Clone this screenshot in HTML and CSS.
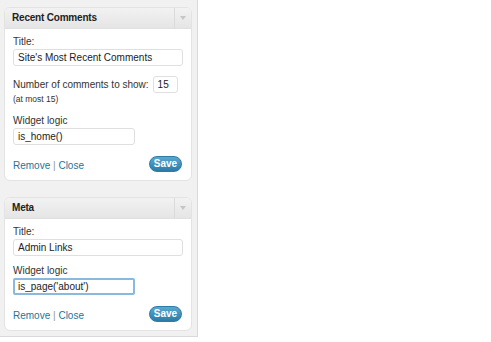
FILE: index.html
```html
<!DOCTYPE html>
<html lang="en">
<head>
  <meta charset="UTF-8" />
  <title>Widgets</title>
  <link rel="stylesheet" href="styles.css">
</head>
<body>
  <div class="sidebar">
    <div class="widget">
      <div class="widget-top">
        <div class="widget-title">Recent Comments</div>
        <div class="widget-action"><span class="arrow"></span></div>
      </div>
      <div class="widget-inside">
        <label class="field-label">Title:</label>
        <input type="text" class="wide" value="Site's Most Recent Comments" />
        <div class="count-row">
          <span>Number of comments to show:</span>
          <input type="text" class="tiny" value="15" />
        </div>
        <div class="hint">(at most 15)</div>
        <label class="field-label logic-label">Widget logic</label>
        <input type="text" class="mid" value="is_home()" />
        <div class="control-row">
          <span class="links"><a href="#">Remove</a> | <a href="#">Close</a></span>
          <button class="save">Save</button>
        </div>
      </div>
    </div>

    <div class="widget">
      <div class="widget-top">
        <div class="widget-title">Meta</div>
        <div class="widget-action"><span class="arrow"></span></div>
      </div>
      <div class="widget-inside">
        <label class="field-label">Title:</label>
        <input type="text" class="wide" value="Admin Links" />
        <label class="field-label logic-label">Widget logic</label>
        <input type="text" class="mid focused" value="is_page('about')" />
        <div class="control-row">
          <span class="links"><a href="#">Remove</a> | <a href="#">Close</a></span>
          <button class="save">Save</button>
        </div>
      </div>
    </div>
  </div>
</body>
</html>
```

FILE: styles.css
```css
body {
  margin: 0;
  background: #fff;
  font-family: "Liberation Sans", Arial, sans-serif;
  font-size: 10px;
  color: #333;
}

.sidebar {
  width: 198px;
  height: 337px;
  box-sizing: border-box;
  background: #f1f1f1;
  border-right: 1px solid #d9d9d9;
  border-bottom: 1px solid #d9d9d9;
  padding: 7px 5px 0 4px;
}

.widget {
  background: #fff;
  border: 1px solid #e3e3e3;
  border-radius: 6px;
  margin-bottom: 16px;
  overflow: hidden;
}

.widget-top {
  display: flex;
  height: 20px;
  background: linear-gradient(#f2f2f2, #e5e5e5);
  border-bottom: 1px solid #e0e0e0;
}

.widget-title {
  flex: 1;
  padding-left: 7px;
  line-height: 20px;
  font-weight: bold;
  letter-spacing: -0.2px;
  color: #222;
}

.widget-action {
  width: 16px;
  border-left: 1px solid #dadada;
  display: flex;
  align-items: center;
  justify-content: center;
}

.arrow {
  width: 0;
  height: 0;
  border-left: 3px solid transparent;
  border-right: 3px solid transparent;
  border-top: 4px solid #c6c6c6;
}

.widget-inside {
  padding: 6px 9px 8px 8px;
}

.field-label {
  display: block;
  line-height: 14px;
  color: #333;
}

input {
  font-family: inherit;
  font-size: 10px;
  color: #222;
  border: 1px solid #dfdfdf;
  border-radius: 3px;
  height: 17px;
  box-sizing: border-box;
  padding: 0 4px;
  background: #fff;
  outline: none;
}

.wide {
  width: 170px;
  display: block;
}

.mid {
  width: 122px;
  display: block;
}

.tiny {
  width: 25px;
  margin-left: 4px;
}

.focused {
  border: 2px solid #8ab8de;
  border-radius: 2px;
  padding: 0 3px;
}

.count-row {
  margin-top: 10px;
  display: flex;
  align-items: center;
}

.hint {
  font-size: 8.5px;
  line-height: 11px;
  margin-top: 1px;
  color: #333;
}

.logic-label {
  margin-top: 9px;
}

.wide + .logic-label {
  margin-top: 8px;
}

.control-row {
  display: flex;
  justify-content: space-between;
  align-items: center;
  margin-top: 11px;
}

.links {
  color: #999;
  padding-top: 2px;
}

.links a {
  color: #21759b;
  text-decoration: none;
}

.save {
  font-family: inherit;
  font-size: 10px;
  font-weight: bold;
  color: #fff;
  background: linear-gradient(#5aa8d0, #2b7ba8);
  border: 1px solid #2d7ca6;
  border-radius: 9px;
  width: 33px;
  height: 16px;
  padding: 0;
  line-height: 14px;
}
```
